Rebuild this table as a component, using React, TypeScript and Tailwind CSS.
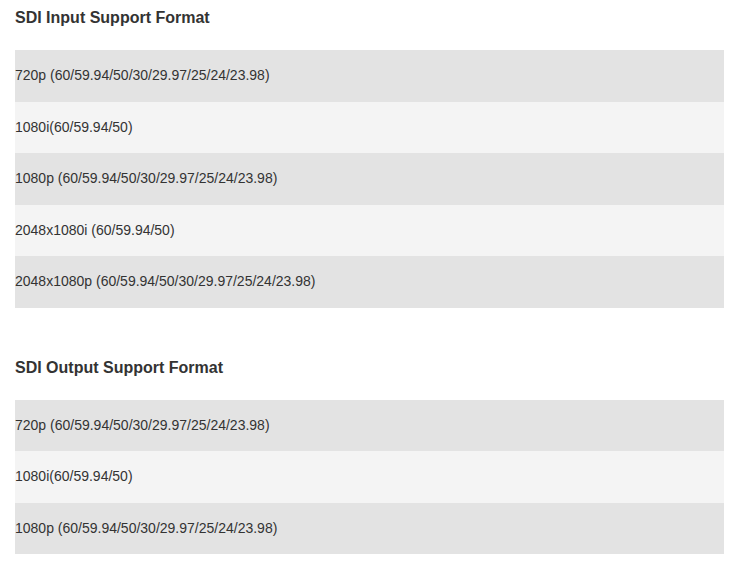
const inputFormats = [
  "720p (60/59.94/50/30/29.97/25/24/23.98)",
  "1080i(60/59.94/50)",
  "1080p (60/59.94/50/30/29.97/25/24/23.98)",
  "2048x1080i (60/59.94/50)",
  "2048x1080p (60/59.94/50/30/29.97/25/24/23.98)",
];

const outputFormats = [
  "720p (60/59.94/50/30/29.97/25/24/23.98)",
  "1080i(60/59.94/50)",
  "1080p (60/59.94/50/30/29.97/25/24/23.98)",
];

const FormatTable = ({ title, rows }: { title: string; rows: string[] }) => (
  <section>
    {/* heading */}
    <h2 className="text-[16px] leading-[34px] pt-px font-bold text-[#333]">{title}</h2>
    {/* rows */}
    <div className="mt-[15px] w-[709px]">
      {rows.map((row, i) => (
        <div
          key={i}
          className={`flex items-center h-[51.5px] text-[14px] text-[#333] ${i % 2 === 0 ? "bg-[#e3e3e3]" : "bg-[#f4f4f4]"}`}
        >
          {row}
        </div>
      ))}
    </div>
  </section>
);

export default function App() {
  return (
    <div
      className="bg-white min-h-[584px] pl-[15px] pr-4"
      style={{ fontFamily: '"Liberation Sans", Arial, Helvetica, sans-serif' }}
    >
      <FormatTable title="SDI Input Support Format" rows={inputFormats} />
      <div className="h-[42px]" />
      <FormatTable title="SDI Output Support Format" rows={outputFormats} />
    </div>
  );
}
